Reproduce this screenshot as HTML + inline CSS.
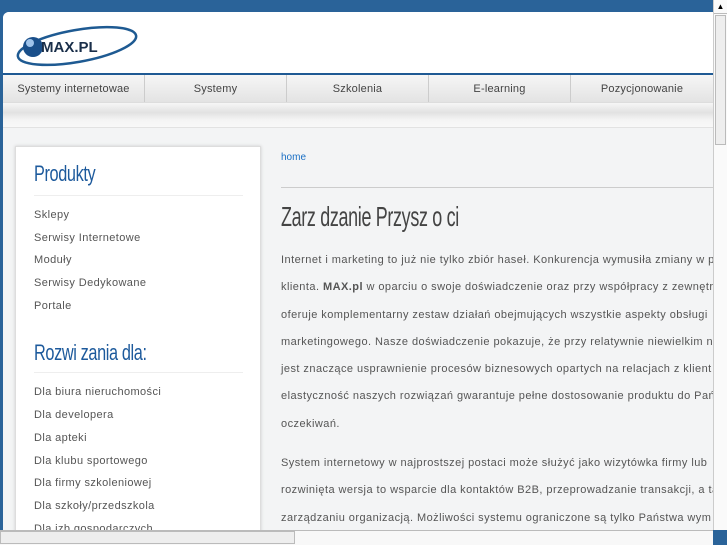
<!DOCTYPE html><html><head><meta charset="utf-8"><style>
*{margin:0;padding:0;box-sizing:border-box}
body{width:727px;height:545px;overflow:hidden;background:#2a6399;font-family:"Liberation Sans",sans-serif;position:relative}
#pg{position:absolute;left:3px;top:12px;width:710px;height:518px;background:#f3f4f5;border-radius:6px 0 0 0;overflow:hidden}
#hd{height:63px;background:#fff;position:relative;border-bottom:2px solid #1f5a94}
#nav{height:28px;background:linear-gradient(#f6f6f6,#e3e3e3);display:flex;border-bottom:1px solid #ddd}
#nav div{width:146px;text-align:center;font-size:11px;color:#444;line-height:28px;border-right:1px solid #ccc;letter-spacing:.2px}
#band{height:25px;background:linear-gradient(#f6f6f6 0,#e2e2e2 40%,#f4f4f4 70%,#f8f8f8);border-bottom:1px solid #e2e2e2}
#side{position:absolute;left:12px;top:134px;width:246px;height:400px;background:#fff;border:1px solid #ddd;box-shadow:0 0 3px #ccc}
h2{font-family:"Liberation Sans Narrow","Liberation Sans",sans-serif;font-weight:normal;color:#1d5a9c;font-size:22px;letter-spacing:-0.5px;transform:scaleX(.74);transform-origin:left;white-space:nowrap}
.hr{height:1px;background:#eee;margin:0 17px 0 18px}
#side ul{list-style:none;font-size:11px;color:#555;padding-left:18px;letter-spacing:.4px}
#side li{height:22.7px}
#main{position:absolute;left:278px;top:128px;width:440px}
#main p{font-size:11px;color:#555;line-height:27.3px;white-space:nowrap;letter-spacing:.45px}
#vs{position:absolute;right:0;top:0;width:14px;height:530px;background:#fafafa;border-left:1px solid #ccc}
#hs{position:absolute;left:0;top:530px;width:713px;height:15px;background:#f8f8f8;border-top:1px solid #bbb}
</style></head><body>
<div id="pg">
<div id="hd">
<svg style="position:absolute;left:8px;top:10px" width="130" height="48"><ellipse cx="66" cy="24" rx="60" ry="16" fill="none" stroke="#1e5a92" stroke-width="2.5" transform="rotate(-10 66 24)"/><circle cx="22" cy="25" r="10" fill="#1a4f8a"/><circle cx="19" cy="21" r="4" fill="#9fc3ea"/><text x="30" y="30" font-family="Liberation Sans" font-weight="bold" font-size="15" fill="#1a2f4a">MAX.PL</text></svg>
</div>
<div id="nav"><div>Systemy internetowae</div><div>Systemy</div><div>Szkolenia</div><div>E-learning</div><div style="border:0">Pozycjonowanie</div></div>
<div id="band"></div>
<div id="side">
<h2 style="margin:14px 0 0 18px;height:34px">Produkty</h2>
<div class="hr"></div>
<ul style="margin-top:13px"><li>Sklepy</li><li>Serwisy Internetowe</li><li>Moduły</li><li>Serwisy Dedykowane</li><li>Portale</li></ul>
<h2 style="margin:18px 0 0 18px;height:32px">Rozwi zania dla:</h2>
<div class="hr"></div>
<ul style="margin-top:13px"><li>Dla biura nieruchomości</li><li>Dla developera</li><li>Dla apteki</li><li>Dla klubu sportowego</li><li>Dla firmy szkoleniowej</li><li>Dla szkoły/przedszkola</li><li>Dla izb gospodarczych</li></ul>
</div>
<div id="main">
<div style="font-size:10px;color:#1a6fc4;padding-top:12px;height:47px">home</div>
<div style="height:1px;background:#ccc;width:440px"></div>
<h2 style="color:#444;font-size:28px;margin:13px 0 0;height:46px;transform:scaleX(.64)">Zarz dzanie Przysz o ci</h2>
<p>Internet i marketing to już nie tylko zbiór haseł. Konkurencja wymusiła zmiany w p<br>klienta. <b>MAX.pl</b> w oparciu o swoje doświadczenie oraz przy współpracy z zewnętr<br>oferuje komplementarny zestaw działań obejmujących wszystkie aspekty obsługi<br>marketingowego. Nasze doświadczenie pokazuje, że przy relatywnie niewielkim na<br>jest znaczące usprawnienie procesów biznesowych opartych na relacjach z klient<br>elastyczność naszych rozwiązań gwarantuje pełne dostosowanie produktu do Pań<br>oczekiwań.</p>
<p style="margin-top:12px">System internetowy w najprostszej postaci może służyć jako wizytówka firmy lub<br>rozwinięta wersja to wsparcie dla kontaktów B2B, przeprowadzanie transakcji, a ta<br>zarządzaniu organizacją. Możliwości systemu ograniczone są tylko Państwa wym</p>
</div>
</div>
<div id="vs"><div style="height:14px;border-bottom:1px solid #bbb;font-size:8px;text-align:center;line-height:14px">▲</div><div style="margin:1px;height:130px;background:#eee;border:1px solid #bbb"></div></div>
<div id="hs"><div style="width:295px;height:13px;background:#eee;border:1px solid #bbb"></div></div>
</body></html>
